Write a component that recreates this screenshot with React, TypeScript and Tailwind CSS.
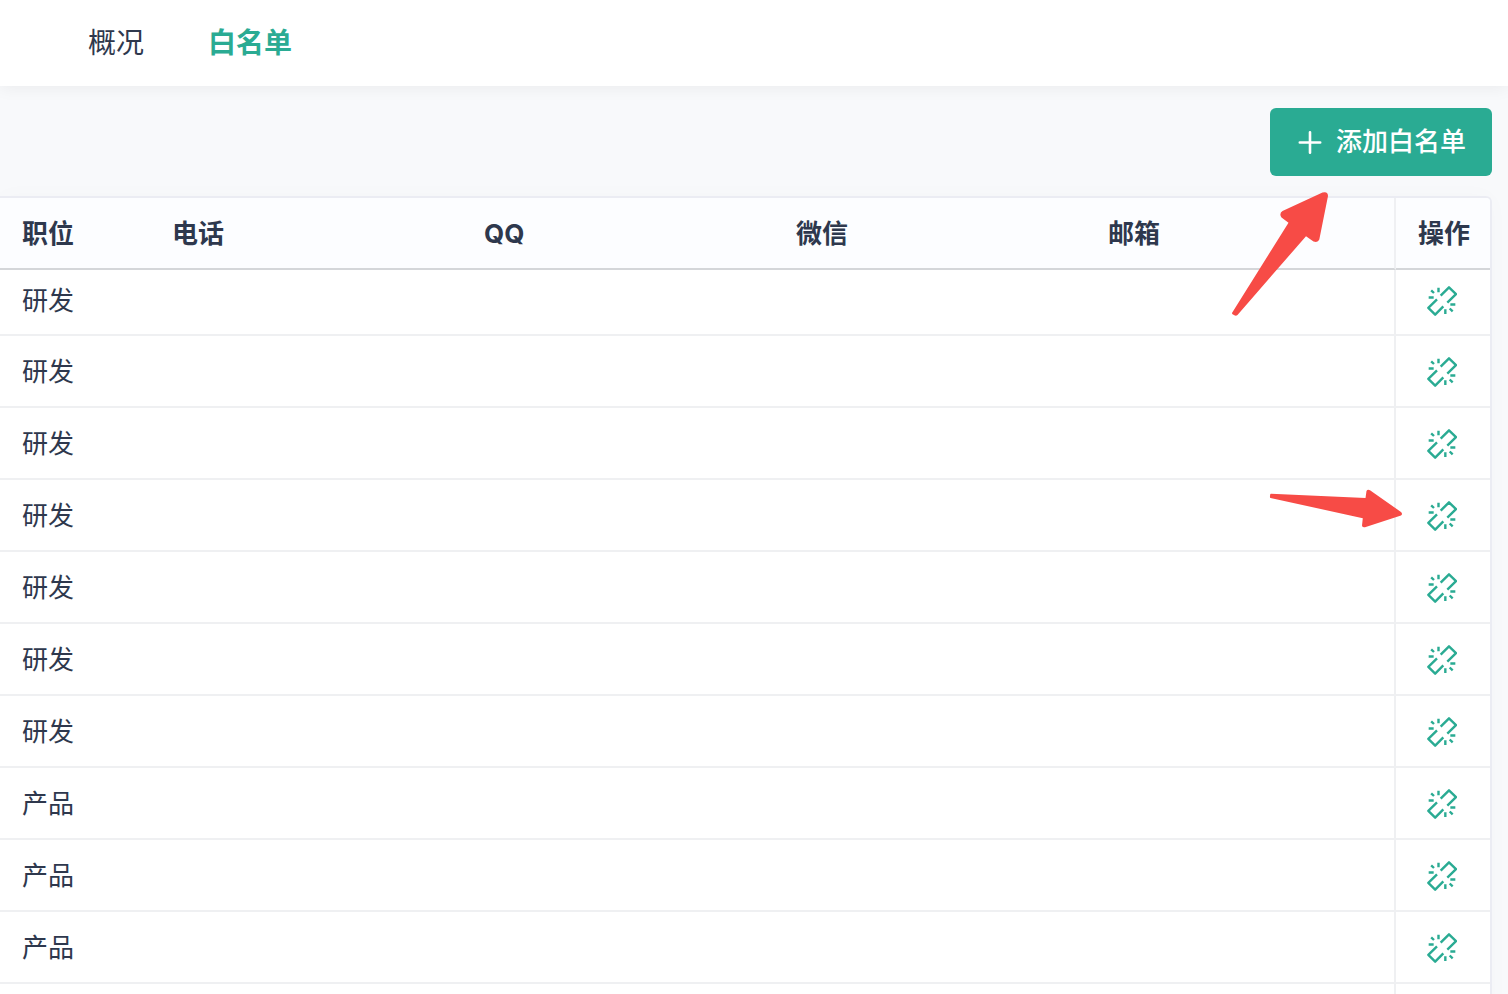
const rows = ['研发', '研发', '研发', '研发', '研发', '研发', '研发', '产品', '产品', '产品', ''];
const contactColumns = ['电话', 'QQ', '微信', '邮箱'];

function PlusIcon() {
  return (
    <svg viewBox="0 0 26 26" className="size-[26px]" fill="none" stroke="currentColor" strokeWidth="2.6" strokeLinecap="round" aria-hidden="true">
      <path d="M14 3.300v20.400M3.800 13.500h20.400" />
    </svg>
  );
}

function UnlinkIcon() {
  return (
    <svg
      viewBox="51 48 90 90"
      className="size-[30px]"
      fill="none"
      stroke="currentColor"
      strokeWidth="7.2"
      strokeLinejoin="round"
      aria-hidden="true"
    >
      <path d="M92 77L117 52L138 72.500L112 98" />
      <path d="M81 88L55 113.500L75.500 134L100 109" />
      <path d="M63.500 61L72 69M85.500 53v13.500M56 82.500h15M121 103.500h15M119 115.500l9 8.500M106 118v14" />
    </svg>
  );
}

function ButtonPointer() {
  return (
    <svg
      viewBox="0 0 100 128"
      className="pointer-events-none absolute top-[82px] right-[162px] z-10 h-[128px] w-[100px]"
      fill="#f74b46"
      aria-hidden="true"
    >
      <path d="M2.300 122.500L58.500 32.700L51.500 27.500Q48.800 23.500 52.500 21L92.500 2.500Q98 1 98 6L89.300 49.500Q88 53 83.500 51.500L76 46.200L7.500 125Q5.500 126.500 3 124.500Q1.500 123.500 2.300 122.500Z" />
    </svg>
  );
}

function RowPointer() {
  return (
    <svg
      viewBox="0 0 136 42"
      className="pointer-events-none absolute top-[8px] -left-[128px] z-10 h-[42px] w-[136px]"
      fill="#f74b46"
      aria-hidden="true"
    >
      <path d="M3 5.700L97.500 10L98.500 3Q99.500 1 102 2.200L133 24Q135 26 133 27.500L97 39.200Q94 39.800 94 37.500L94.800 30.200L2.500 10Q1.800 9.800 2 8L2.200 6.500Q2.200 5.700 3 5.700Z" />
    </svg>
  );
}

const headCell = 'h-[72px] border-b-2 border-[#d4d6d9] bg-[#fcfdff] pt-[2px] pr-0 pb-0 text-left font-bold';

export default function App() {
  return (
    <div className="flex h-screen flex-col overflow-hidden bg-[#f8f9fb] font-['Inter','Noto_Sans_CJK_SC',sans-serif] text-[26px] leading-[40px] text-[#2e384d]">
      <header className="relative z-10 shrink-0 bg-white shadow-[0_2px_16px_rgba(0,0,0,0.06)]">
        <nav className="flex h-[86px] items-center gap-16 pl-[88px] text-[28px]">
          <a href="#overview">概况</a>
          <a href="#whitelist" aria-current="page" className="font-bold text-[#2aab93]">
            白名单
          </a>
        </nav>
      </header>

      <main className="pr-4">
        <div className="relative flex justify-end pt-[22px] pb-5">
          <button
            type="button"
            className="flex h-[68px] items-center gap-[14px] rounded-md bg-[#2aab93] px-[26px] font-medium text-white"
          >
            <PlusIcon />
            添加白名单
          </button>
          <div className="absolute top-[22px] right-0">
            <ButtonPointer />
          </div>
        </div>

        <div className="rounded-tr-md border-t-2 border-r-2 border-[#ebecf3] bg-white shadow-[0_0_24px_rgba(46,56,77,0.02)]">
          <table className="w-full table-fixed border-separate border-spacing-0">
            <colgroup>
              <col className="w-[148px]" />
              {contactColumns.map((name) => (
                <col key={name} />
              ))}
              <col className="w-[94px]" />
            </colgroup>
            <thead>
              <tr>
                <th scope="col" className={`${headCell} pl-[22px]`}>
                  职位
                </th>
                {contactColumns.map((name) => (
                  <th key={name} scope="col" className={`${headCell} pl-6 ${name === '邮箱' ? 'border-r-2 border-r-[#eff0f3]' : ''}`}>
                    {name}
                  </th>
                ))}
                <th scope="col" className={`${headCell} rounded-tr-sm pl-[22px]`}>
                  操作
                </th>
              </tr>
            </thead>
            <tbody className="[&_td]:border-b-2 [&_td]:border-[#eff0f2]">
              {rows.map((role, index) => (
                <tr key={index} className={index === 0 ? 'h-[66px] [&>td]:pb-[2px]' : 'h-[72px] [&>td]:pt-[2px]'}>
                  <td className="pl-[22px]">{role}</td>
                  <td />
                  <td />
                  <td />
                  <td className="border-r-2" />
                  <td className="relative pl-[31px]">
                    <button type="button" aria-label="移除" className="block text-[#2aab93]">
                      <UnlinkIcon />
                    </button>
                    {index === 3 && <RowPointer />}
                  </td>
                </tr>
              ))}
            </tbody>
          </table>
        </div>
      </main>
    </div>
  );
}
